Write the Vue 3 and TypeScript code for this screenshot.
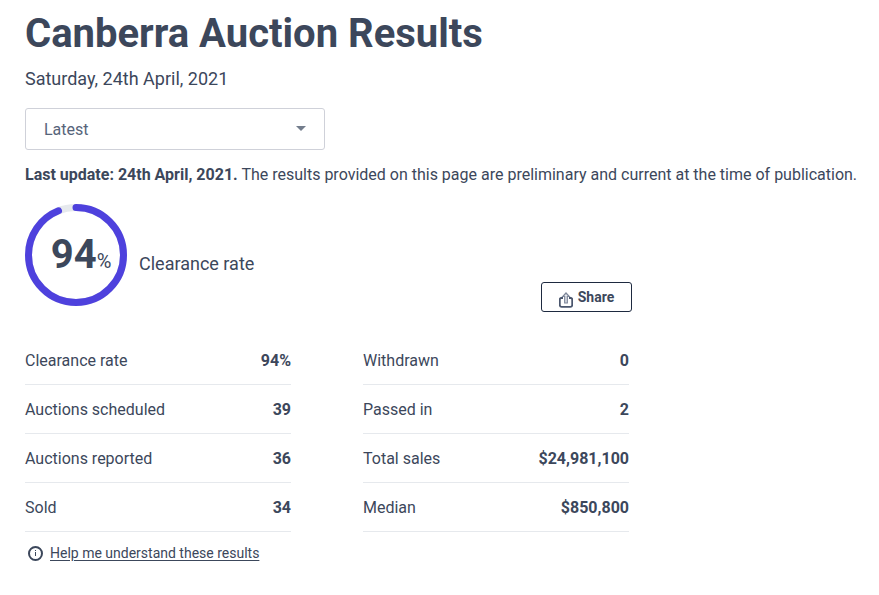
<script setup lang="ts">
import { computed, ref } from 'vue'

interface Stat {
  label: string
  value: string
}

const period = ref('latest')
const clearanceRate = ref(94)

const columns: Stat[][] = [
  [
    { label: 'Clearance rate', value: '94%' },
    { label: 'Auctions scheduled', value: '39' },
    { label: 'Auctions reported', value: '36' },
    { label: 'Sold', value: '34' },
  ],
  [
    { label: 'Withdrawn', value: '0' },
    { label: 'Passed in', value: '2' },
    { label: 'Total sales', value: '$24,981,100' },
    { label: 'Median', value: '$850,800' },
  ],
]

const dash = computed(() => `${clearanceRate.value} 100`)
</script>

<template>
  <main class="results">
    <h1 class="title">Canberra Auction Results</h1>
    <p class="date">Saturday, 24th April, 2021</p>

    <div class="picker">
      <select v-model="period" class="select" aria-label="Results period">
        <option value="latest">Latest</option>
      </select>
      <svg class="caret" viewBox="0 0 10 5" aria-hidden="true"><path d="M0 0h10L5 5z" /></svg>
    </div>

    <p class="notice">
      <strong>Last update: 24th April, 2021.</strong>
      The results provided on this page are preliminary and current at the time of publication.
    </p>

    <section class="summary">
      <div class="overview">
        <div class="gauge">
          <svg class="ring" viewBox="0 0 102 102" aria-hidden="true">
            <circle class="track" cx="51" cy="51" r="47.5" />
            <circle class="arc" cx="51" cy="51" r="47.5" pathLength="100" :stroke-dasharray="dash" transform="rotate(-90 51 51)" />
          </svg>
          <p class="rate"><span class="number">{{ clearanceRate }}</span><span class="percent">%</span></p>
        </div>
        <p class="caption">Clearance rate</p>
        <button type="button" class="share">
          <svg class="share-icon" viewBox="0 0 14 16" aria-hidden="true">
            <path class="tray" d="M4 6H2.200Q.8 6 .8 7.400v5.600q0 1.800 1.800 1.800h8.800q1.800 0 1.800-1.800V7.400Q13.200 6 11.800 6H10" />
            <path class="arrow" d="M7 1 3.800 4.500h1.900v6.500h2.600V4.500h1.900z" />
          </svg>
          Share
        </button>
      </div>

      <div class="stats">
        <dl v-for="(column, index) in columns" :key="index" class="column">
          <div v-for="stat in column" :key="stat.label" class="stat">
            <dt>{{ stat.label }}</dt>
            <dd>{{ stat.value }}</dd>
          </div>
        </dl>
      </div>

      <div class="help">
        <svg class="info" viewBox="0 0 16 16" aria-hidden="true">
          <circle cx="7.500" cy="8.500" r="6.500" />
          <path d="M7 5h1v1H7zM7 7h1v4H7z" />
        </svg>
        <a href="#help">Help me understand these results</a>
      </div>
    </section>
  </main>
</template>

<style>
body {
  margin: 0;
  background: #fff;
}
</style>

<style scoped>
.results {
  padding: 10px 16px 32px 25px;
  color: #3c475b;
  font-family: Roboto, "Liberation Sans", sans-serif;
  font-size: 16px;
  line-height: 24px;
}

.title,
.date,
.notice,
.rate,
.caption,
.column,
.stat dd {
  margin: 0;
}

.title {
  font-size: 40px;
  font-weight: 700;
  line-height: 48px;
}

.date {
  margin-top: 9px;
  font-size: 18px;
}

.picker {
  position: relative;
  max-width: 300px;
  margin-top: 17px;
}

.select {
  display: block;
  box-sizing: border-box;
  width: 100%;
  height: 42px;
  padding: 2px 40px 0 18px;
  border: 1px solid #cfd1d9;
  border-radius: 3px;
  background: #fff;
  color: #56647a;
  font: inherit;
  appearance: none;
}

.caret {
  position: absolute;
  top: 18px;
  right: 19px;
  width: 10px;
  height: 5px;
  fill: #737d8c;
  pointer-events: none;
}

.notice {
  margin-top: 13px;
}

.summary {
  max-width: 607px;
}

.overview {
  display: flex;
  align-items: center;
  margin-top: 17px;
}

.gauge {
  display: grid;
  flex: none;
  place-items: center;
  width: 102px;
  height: 102px;
}

.gauge > * {
  grid-area: 1 / 1;
}

.ring {
  width: 102px;
  height: 102px;
  fill: none;
  stroke-width: 7;
}

.track {
  stroke: #e6e9ed;
}

.arc {
  stroke: #4e41dd;
  stroke-linecap: round;
}

.rate {
  padding: 8px 0 0 10px;
  line-height: 48px;
}

.number {
  font-size: 40px;
  font-weight: 700;
}

.percent {
  font-size: 20px;
}

.caption {
  padding: 18px 0 0 12px;
  font-size: 18px;
}

.share {
  display: flex;
  align-items: center;
  align-self: flex-end;
  justify-content: center;
  gap: 5px;
  box-sizing: border-box;
  width: 91px;
  height: 30px;
  margin: 0 0 -6px auto;
  padding: 0;
  border: 1px solid #1e2a40;
  border-radius: 3px;
  background: #fff;
  color: #3c475b;
  font: inherit;
  font-size: 14px;
  font-weight: 700;
  line-height: 20px;
}

.share-icon {
  width: 14px;
  height: 16px;
  padding-top: 5px;
  fill: none;
}

.tray {
  stroke: #4a566d;
  stroke-width: 1.8;
}

.arrow {
  fill: #e6e9ed;
  stroke: #7d8699;
  stroke-width: 1.2;
}

.stats {
  display: grid;
  grid-template-columns: 1fr 1fr;
  gap: 72px;
  margin-top: 30px;
  padding-right: 3px;
}

.stat {
  display: flex;
  justify-content: space-between;
  padding: 13px 0 11px;
  border-bottom: 1px solid #e6e9ed;
}

.stat dd {
  font-weight: 700;
}

.help {
  display: flex;
  align-items: center;
  gap: 6px;
  margin-top: 9px;
  padding-left: 3px;
  font-size: 14px;
}

.help a {
  color: inherit;
  text-underline-offset: 2px;
}

.info {
  width: 16px;
  height: 16px;
}

.info circle {
  fill: none;
  stroke: #3c475b;
  stroke-width: 2;
}

.info path {
  fill: #3c475b;
}
</style>
